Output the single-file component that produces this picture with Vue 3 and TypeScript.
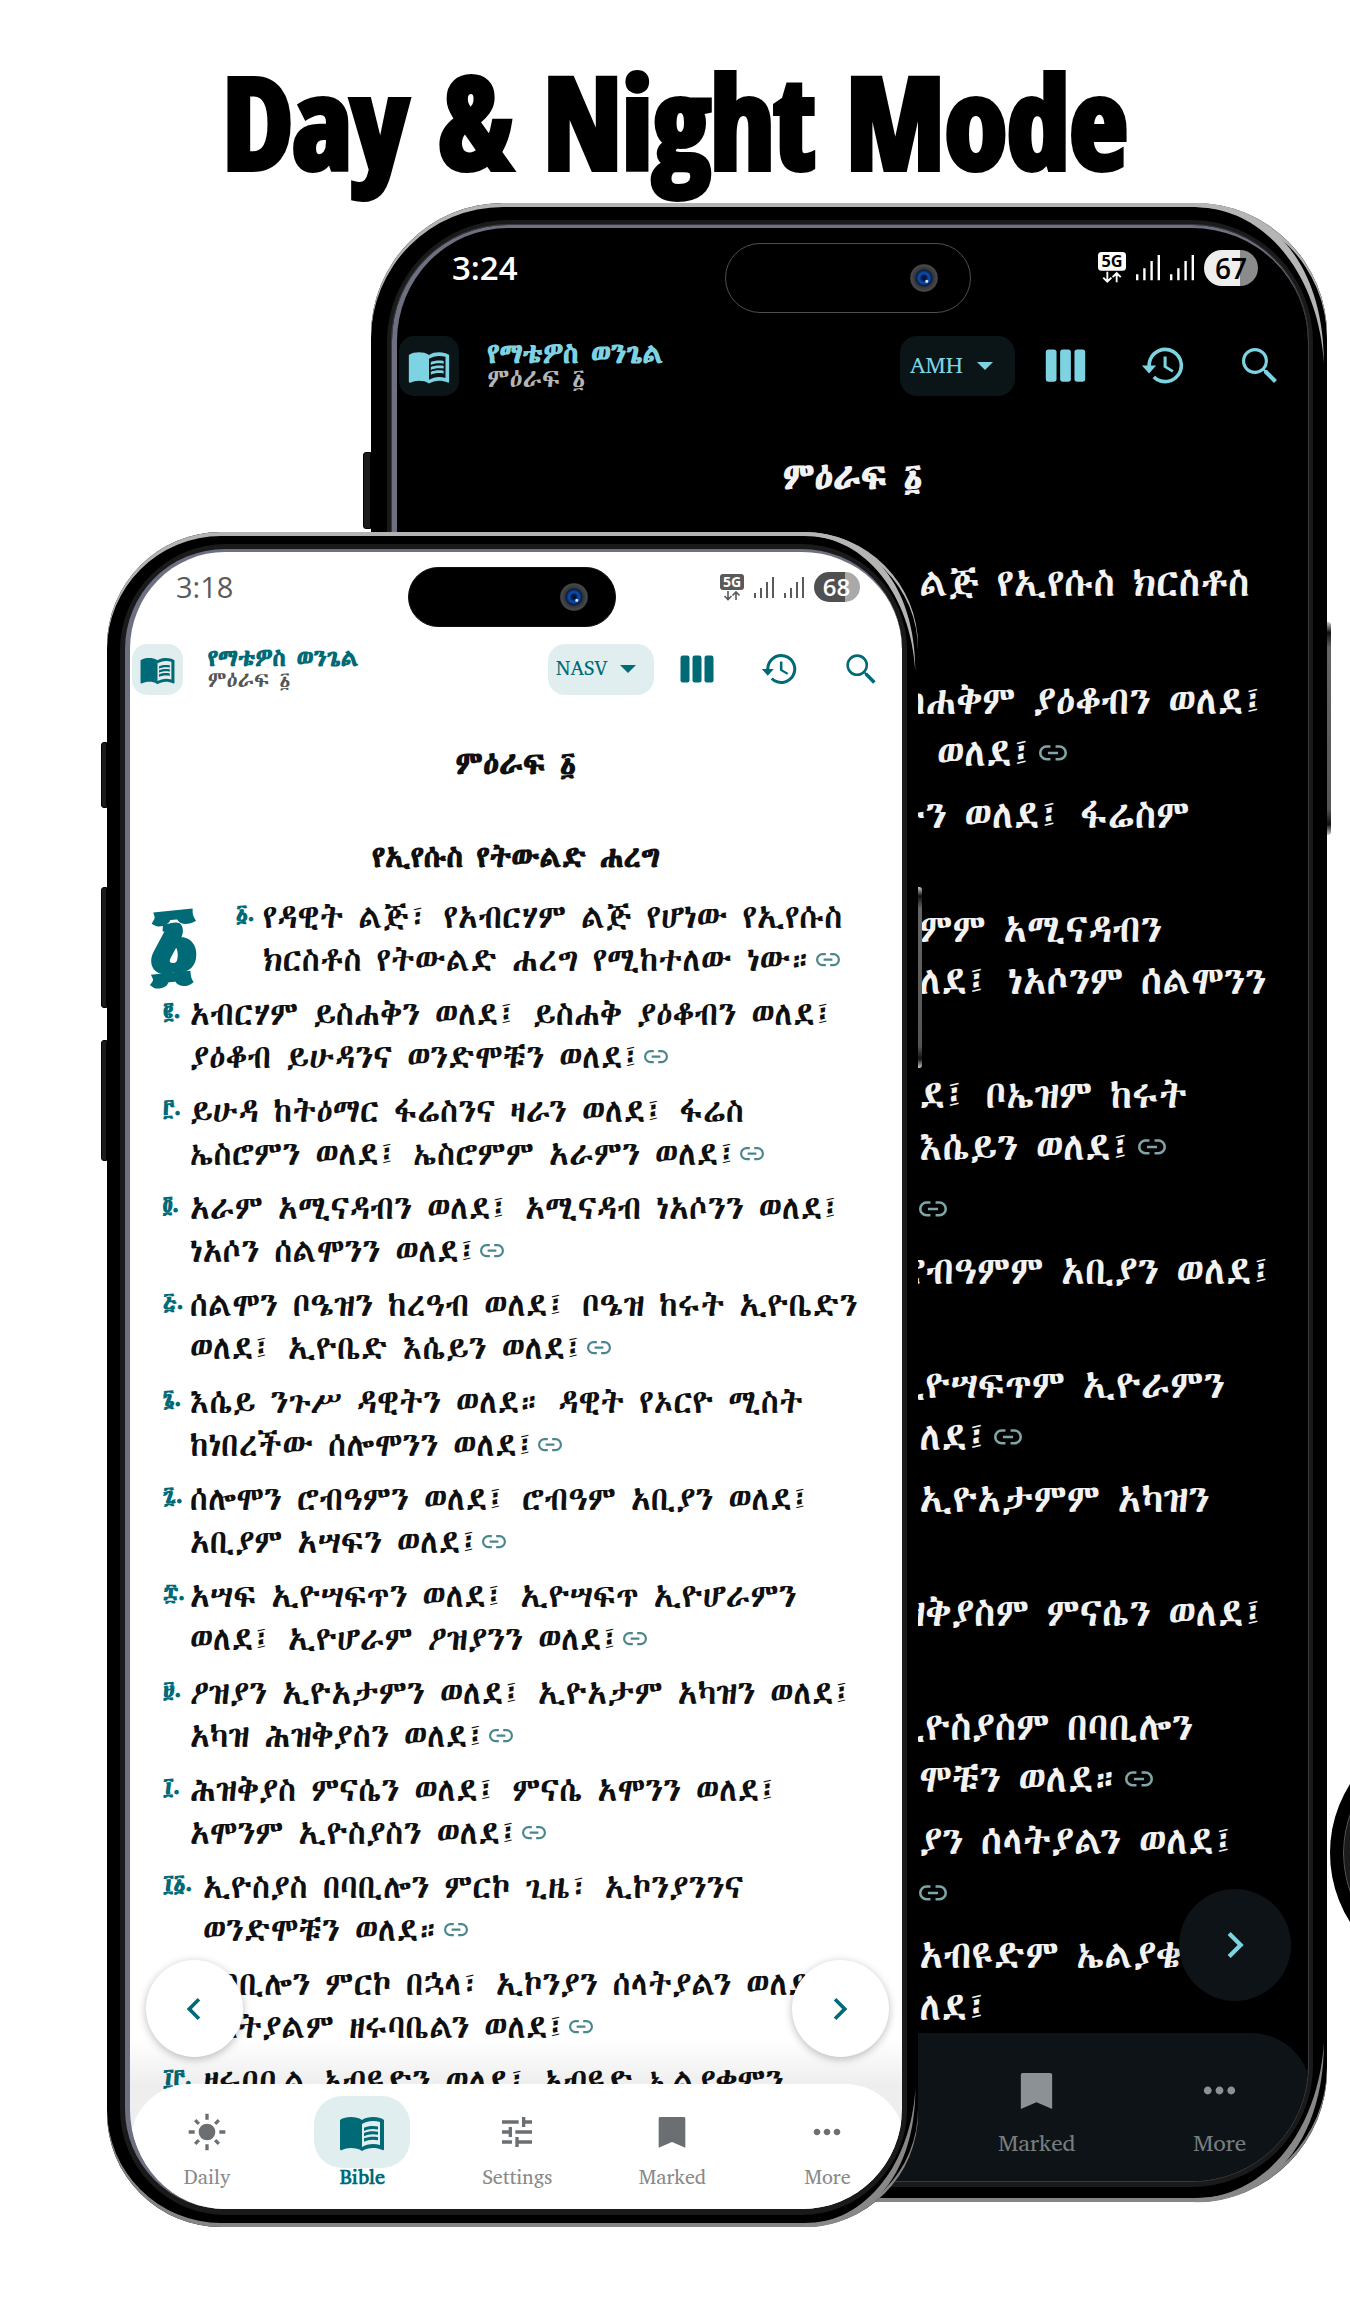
<script setup lang="ts">
interface Verse { num?: string; lines: string[]; link?: boolean; wide?: boolean; drop?: boolean }
interface CutLine { head?: string; text?: string; link?: boolean }
interface Phone { theme: 'night' | 'day'; time: string; battery: number; version: string; heading?: string }

const phones: Phone[] = [
  { theme: 'night', time: '3:24', battery: 67, version: 'AMH' },
  { theme: 'day', time: '3:18', battery: 68, version: 'NASV', heading: 'የኢየሱስ የትውልድ ሐረግ' },
]

const verses: Verse[] = [
  { num: '፩', lines: ['የዳዊት ልጅ፣ የአብርሃም ልጅ የሆነው የኢየሱስ', 'ክርስቶስ የትውልድ ሐረግ የሚከተለው ነው።'], link: true, drop: true },
  { num: '፪', lines: ['አብርሃም ይስሐቅን ወለደ፤ ይስሐቅ ያዕቆብን ወለደ፤', 'ያዕቆብ ይሁዳንና ወንድሞቹን ወለደ፤'], link: true },
  { num: '፫', lines: ['ይሁዳ ከትዕማር ፋሬስንና ዛራን ወለደ፤ ፋሬስ', 'ኤስሮምን ወለደ፤ ኤስሮምም አራምን ወለደ፤'], link: true },
  { num: '፬', lines: ['አራም አሚናዳብን ወለደ፤ አሚናዳብ ነአሶንን ወለደ፤', 'ነአሶን ሰልሞንን ወለደ፤'], link: true },
  { num: '፭', lines: ['ሰልሞን ቦዔዝን ከረዓብ ወለደ፤ ቦዔዝ ከሩት ኢዮቤድን', 'ወለደ፤ ኢዮቤድ እሴይን ወለደ፤'], link: true },
  { num: '፮', lines: ['እሴይ ንጉሥ ዳዊትን ወለደ። ዳዊት የኦርዮ ሚስት', 'ከነበረችው ሰሎሞንን ወለደ፤'], link: true },
  { num: '፯', lines: ['ሰሎሞን ሮብዓምን ወለደ፤ ሮብዓም አቢያን ወለደ፤', 'አቢያም አሣፍን ወለደ፤'], link: true },
  { num: '፰', lines: ['አሣፍ ኢዮሣፍጥን ወለደ፤ ኢዮሣፍጥ ኢዮሆራምን', 'ወለደ፤ ኢዮሆራም ዖዝያንን ወለደ፤'], link: true },
  { num: '፱', lines: ['ዖዝያን ኢዮአታምን ወለደ፤ ኢዮአታም አካዝን ወለደ፤', 'አካዝ ሕዝቅያስን ወለደ፤'], link: true },
  { num: '፲', lines: ['ሕዝቅያስ ምናሴን ወለደ፤ ምናሴ አሞንን ወለደ፤', 'አሞንም ኢዮስያስን ወለደ፤'], link: true },
  { num: '፲፩', lines: ['ኢዮስያስ በባቢሎን ምርኮ ጊዜ፣ ኢኮንያንንና', 'ወንድሞቹን ወለደ።'], link: true, wide: true },
  { num: '፲፪', lines: ['ከባቢሎን ምርኮ በኋላ፣ ኢኮንያን ሰላትያልን ወለደ፤', 'ሰላትያልም ዘሩባቤልን ወለደ፤'], link: true, wide: true },
  { num: '፲፫', lines: ['ዘሩባቤል አብዩድን ወለደ፤ አብዩድ ኤልያቄምን'], wide: true },
]

const nightVerses: CutLine[][] = [
  [{ text: 'ልጅ የኢየሱስ ክርስቶስ' }, {}],
  [{ head: 'ስ', text: 'ሐቅም ያዕቆብን ወለደ፤' }, { text: ' ወለደ፤', link: true }],
  [{ head: 'ሁ', text: 'ን ወለደ፤ ፋሬስም' }, {}],
  [{ text: 'ምም አሚናዳብን' }, { text: 'ለደ፤ ነአሶንም ሰልሞንን' }, {}],
  [{ text: 'ደ፤ ቦኤዝም ከሩት' }, { text: 'እሴይን ወለደ፤', link: true }],
  [{ link: true }],
  [{ head: 'ሮ', text: 'ብዓምም አቢያን ወለደ፤' }, {}],
  [{ head: 'ኢ', text: 'ዮሣፍጥም ኢዮራምን' }, { text: 'ለደ፤', link: true }],
  [{ text: 'ኢዮአታምም አካዝን' }, {}],
  [{ head: 'ዝ', text: 'ቅያስም ምናሴን ወለደ፤' }, {}],
  [{ head: 'ኢ', text: 'ዮስያስም በባቢሎን' }, { text: 'ሞቹን ወለደ።', link: true }],
  [{ text: 'ያን ሰላትያልን ወለደ፤' }, { link: true }],
  [{ text: 'አብዩድም ኤልያቄ' }, { text: 'ለደ፤' }],
]

const book = 'M21 5c-1.11-.35-2.33-.5-3.5-.5-1.95 0-4.05.4-5.5 1.5-1.45-1.1-3.55-1.5-5.5-1.5S2.45 4.9 1 6v14.65c0 .25.25.5.5.5.1 0 .15-.05.25-.05C3.1 20.45 5.05 20 6.5 20c1.95 0 4.05.4 5.5 1.5 1.35-.85 3.8-1.5 5.5-1.5 1.65 0 3.35.3 4.75 1.05.1.05.15.05.25.05.25 0 .5-.25.5-.5V6c-.6-.45-1.25-.75-2-1zm0 13.5c-1.1-.35-2.3-.5-3.5-.5-1.7 0-4.15.65-5.5 1.5V8c1.35-.85 3.8-1.5 5.5-1.5 1.2 0 2.4.15 3.5.5v11.5z M17.5 10.5c.88 0 1.73.09 2.5.26V9.24c-.79-.15-1.64-.24-2.5-.24-1.7 0-3.24.29-4.5.83v1.66c1.13-.64 2.7-.99 4.5-.99z M13 12.49v1.66c1.13-.64 2.7-.99 4.5-.99.88 0 1.73.09 2.5.26V11.9c-.79-.15-1.64-.24-2.5-.24-1.7 0-3.24.3-4.5.83z M17.5 14.33c-1.7 0-3.24.29-4.5.83v1.66c1.13-.64 2.7-.99 4.5-.99.88 0 1.73.09 2.5.26v-1.52c-.79-.16-1.64-.24-2.5-.24z'

const tabs = [
  { label: 'Daily', icon: 'M11 1h2v3.6h-2z M11 19.4h2V23h-2z M1 11h3.6v2H1z M19.4 11H23v2h-3.6z M4.2 5.6l1.4-1.4 2.2 2.2-1.4 1.4z M16.2 17.6l1.4-1.4 2.2 2.2-1.4 1.4z M18.4 4.2l1.4 1.4-2.2 2.2-1.4-1.4z M6.4 16.2l1.4 1.4-2.2 2.2-1.4-1.4z M12 7a5 5 0 1 0 0 10a5 5 0 1 0 0-10z' },
  { label: 'Bible', icon: book, active: true },
  { label: 'Settings', icon: 'M3 17v2h6v-2H3zM3 5v2h10V5H3zm10 16v-2h8v-2h-8v-2h-2v6h2zM7 9v2H3v2h4v2h2V9H7zm14 4v-2H11v2h10zm-6-4h2V7h4V5h-4V3h-2v6z' },
  { label: 'Marked', icon: 'M19 3H5c-.6 0-1 .4-1 1v17.500l8-3.500 8 3.500V4c0-.6-.4-1-1-1z' },
  { label: 'More', icon: 'M6 10c-1.100 0-2 .9-2 2s.9 2 2 2 2-.9 2-2-.9-2-2-2zm12 0c-1.100 0-2 .9-2 2s.9 2 2 2 2-.9 2-2-.9-2-2-2zm-6 0c-1.100 0-2 .9-2 2s.9 2 2 2 2-.9 2-2-.9-2-2-2z' },
]
</script>

<template>
  <main class="page">
    <h1 class="title">Day &amp; Night Mode</h1>
    <div class="stage">
      <section v-for="p in phones" :key="p.theme" class="phone" :class="p.theme" :aria-label="p.theme">
        <i class="side side-a"></i><i class="side side-b"></i><i class="side side-c"></i><i class="side side-r"></i>
        <svg class="gleam gleam-top" viewBox="0 0 130 160"><path d="M0 0C76 0 127 62 127 158C122 74 72 5 0 4Z" /></svg>
        <svg class="gleam gleam-bottom" viewBox="0 0 130 160"><path d="M0 0C76 0 127 62 127 158C122 74 72 5 0 4Z" /></svg>
        <div class="bezel">
          <div class="screen">
            <div class="island"><i class="camera"></i></div>
            <div class="status">
              <time>{{ p.time }}</time>
              <span class="signals">
                <svg class="net" viewBox="0 0 24 27">
                  <rect width="24" height="16" rx="3" fill="currentColor" />
                  <text x="12" y="13" text-anchor="middle" class="net-text">5G</text>
                  <path d="M8 17v8M4.500 22L8 25.500 11.500 22M16 26v-8M12.500 21.500L16 18l3.500 3.500" fill="none" stroke="currentColor" stroke-width="1.600" />
                </svg>
                <svg v-for="n in 2" :key="n" class="bars" viewBox="0 0 20 21"><path d="M0 16h2v5H0zM6 11h2v10H6zM12 5h2v16h-2zM18 0h2v21h-2z" fill="currentColor" /></svg>
                <span class="battery">{{ p.battery }}</span>
              </span>
            </div>
            <header class="bar">
              <button class="book" aria-label="Books"><svg viewBox="0 0 24 24"><path fill-rule="evenodd" :d="book" /></svg></button>
              <div class="names">
                <strong>የማቴዎስ ወንጌል</strong>
                <span>ምዕራፍ ፩</span>
              </div>
              <label class="version">
                <select aria-label="Version"><option>{{ p.version }}</option></select>
                <svg viewBox="0 0 24 24"><path d="M4 8l8 8 8-8z" /></svg>
              </label>
              <button class="tool" aria-label="Columns"><svg viewBox="0 0 24 24"><rect x="1" y="3" width="6" height="18" rx="1.500" /><rect x="9" y="3" width="6" height="18" rx="1.500" /><rect x="17" y="3" width="6" height="18" rx="1.500" /></svg></button>
              <button class="tool" aria-label="History"><svg viewBox="0 0 24 24"><path d="M13.500 2A10 10 0 0 0 3.500 12H.5l4 4.500 4-4.500h-3a8 8 0 1 1 2.340 5.660l-1.400 1.400A10 10 0 1 0 13.500 2zM12.600 7v6l4.800 2.900.8-1.300-3.900-2.300V7z" /></svg></button>
              <button class="tool" aria-label="Search"><svg viewBox="1 1 21.500 21.500"><path d="M15.500 14h-.79l-.28-.27A6.471 6.471 0 0 0 16 9.500 6.500 6.500 0 1 0 9.500 16c1.610 0 3.090-.59 4.230-1.570l.27.28v.79l5 4.990L20.490 19l-4.990-5zm-6 0.400C6.800 14.400 4.600 12.200 4.600 9.500S6.800 4.600 9.500 4.600 14.400 6.800 14.400 9.500 12.200 14.400 9.500 14.400z" /></svg></button>
            </header>
            <h2 class="chapter">ምዕራፍ ፩</h2>
            <h3 v-if="p.heading" class="heading">{{ p.heading }}</h3>

            <div v-if="p.theme === 'day'" class="text">
              <div v-for="v in verses" :key="v.num" class="verse" :class="{ wide: v.wide, first: v.drop }">
                <b v-if="v.drop" class="drop">፩</b>
                <sup class="num">{{ v.num }}.</sup>
                <div class="body">
                  <p v-for="(l, i) in v.lines" :key="l">{{ l }}<a v-if="v.link && i === v.lines.length - 1" href="#ref" class="ref" aria-label="Reference"><svg viewBox="1 0 22 14"><path d="M10 2H7a5 5 0 0 0 0 10h3M14 2h3a5 5 0 0 1 0 10h-3M8 7h8" /></svg></a></p>
                </div>
              </div>
            </div>
            <div v-else class="text">
              <div v-for="(v, k) in nightVerses" :key="k" class="verse">
                <p v-for="(l, i) in v" :key="i" class="cut"><span class="head" :class="{ part: l.head }">{{ l.head }}</span><span class="tail">{{ l.text }}<a v-if="l.link" href="#ref" class="ref" :class="{ lone: !l.text }" aria-label="Reference"><svg viewBox="1 0 22 14"><path d="M10 2H7a5 5 0 0 0 0 10h3M14 2h3a5 5 0 0 1 0 10h-3M8 7h8" /></svg></a></span></p>
              </div>
            </div>

            <footer class="foot">
              <button class="fab prev" aria-label="Previous"><svg viewBox="0 0 24 24"><path d="M15.400 7.400L14 6l-6 6 6 6 1.400-1.400L10.800 12z" /></svg></button>
              <button class="fab next" aria-label="Next"><svg viewBox="0 0 24 24"><path d="M8.600 7.400L10 6l6 6-6 6-1.400-1.400L13.200 12z" /></svg></button>
              <nav class="tabs">
                <a v-for="t in tabs" :key="t.label" href="#tab" class="tab" :class="{ active: t.active }">
                  <span class="glyph"><svg viewBox="0 0 24 24"><path fill-rule="evenodd" :d="t.icon" /></svg></span>
                  {{ t.label }}
                </a>
              </nav>
            </footer>
          </div>
        </div>
      </section>
    </div>
    <i class="orb"></i>
  </main>
</template>

<style>
body { margin: 0; background: #fff; }
</style>

<style scoped>
* { box-sizing: border-box; }
.page { position: relative; overflow: hidden; padding-bottom: 73px; }
.title { margin: 0; padding-top: 44px; height: 203px; text-align: center; white-space: nowrap; color: #000; font: 700 126px/152px "Open Sans Condensed", "DejaVu Sans Condensed", sans-serif; -webkit-text-stroke: 6px #000; }
.stage { display: grid; align-items: start; }
.phone { grid-area: 1 / 1; position: relative; isolation: isolate; background: #000; font-family: "Abyssinica SIL", "Noto Serif Ethiopic", "FreeSerif", "Noto Sans Ethiopic", "Liberation Serif", serif; }
.night {
  --accent: #7ed3e2; --tint: #0b1517; --ink: #f2f2f2; --dim: #b5b5b5; --surface: #0d1317; --page: #000; --icon: #8b9194; --label: #777c7f; --ref: #7fa5a8; --stat: #fff; --knob: #4d4e50;
  --r: 132px; --ri: 116px; --status: 80px; --bar: 115px; --box: 60px; --book: 44px; --tool: 97px; --ic: 43px; --fs: 39px; --lh: 52px; --chap: 107px;
  --time: 33px; --h: 28px; --sub: 26px; --foot: 148px; --fab: 112px; --pill: 85px; --lab: 23px;
  width: 70.8%; margin-left: 27.5%; padding: 17px 14px 15px 16px;
}
.day {
  --accent: #006a76; --tint: #e1eef0; --ink: #101010; --dim: #555; --surface: #fff; --page: #fff; --icon: #6c6f71; --label: #8a8a8a; --ref: #4a868d; --stat: #5a5a5a; --knob: #111;
  --r: 114px; --ri: 100px; --status: 70px; --bar: 94px; --box: 51px; --book: 37px; --tool: 82px; --ic: 36px; --fs: 33px; --lh: 43px; --chap: 95px;
  --time: 29px; --h: 24px; --sub: 22px; --foot: 125px; --fab: 97px; --pill: 72px; --lab: 20px;
  width: 60.1%; margin: 329px 0 0 7.9%; padding: 12px 11px 12px 13px;
}
.phone { border-radius: var(--r); box-shadow: inset 0 4px 0 #b3b3b3, inset 0 -4px 0 #858585; }
.bezel { border: 5px solid #1a1a1a; border-bottom-width: 6px; border-radius: calc(var(--ri) + 6px); background: #1a1a1a; }
.screen { position: relative; overflow: hidden; border-left: 5px solid #6d7080; border-top: 3px solid #6d7080; border-radius: var(--ri); background: var(--page); color: var(--ink); }
.night .screen { outline: 1px solid #3b3b3d; }
.gleam { position: absolute; width: var(--r); right: 0; fill: #b5b5b5; }
.gleam-top { top: 0; }
.gleam-bottom { bottom: 0; fill: #888; transform: scaleY(-1); }
.side { position: absolute; width: 6px; left: -6px; border-radius: 3px 0 0 3px; background: #1b1b1c; border: 1px solid #000; }
.day .side-a { top: 210px; height: 66px; }
.day .side-b { top: 355px; height: 121px; }
.day .side-c { top: 508px; height: 121px; }
.night .side-a { top: 249px; height: 77px; width: 8px; left: -8px; }
.night .side-b, .night .side-c { display: none; }
.side-r { left: auto; right: -4px; width: 4px; background: linear-gradient(#ccc, #111 5%, #666 12%, #555 88%, #111 95%, #ccc); border: 0; border-radius: 0 3px 3px 0; }
.day .side-r { top: 355px; height: 181px; }
.night .side-r { top: 419px; height: 213px; }

.island { position: absolute; top: 15px; left: 36%; width: 27%; height: calc(var(--status) - 10px); border-radius: 36px; background: #000; border: 1px solid var(--knob); }
.camera { position: absolute; right: 13%; top: 50%; width: 28px; height: 28px; margin-top: -14px; border-radius: 50%; background: radial-gradient(circle at 60% 62%, #cfe6ff 1px, transparent 2px), radial-gradient(circle, #06153a 2px, #0d4fb5 5px, #0a1c3d 8px, #333437 9px, #48494c 13px, #2a2a2c 14px); }
.status { height: var(--status); padding: 0 5.5% 0 6%; display: flex; align-items: center; justify-content: space-between; color: var(--stat); }
.status time { font: 400 var(--time)/40px "Open Sans", sans-serif; }
.night time { font-weight: 600; }
.signals { display: flex; align-items: center; gap: 10px; }
.net { width: 24px; overflow: visible; }
.night .net { width: 28px; }
.net-text { font: 700 14px "Open Sans", sans-serif; fill: var(--page); }
.bars { width: 20px; }
.night .bars { width: 24px; }
.battery { width: 46px; border-radius: 18px; text-align: center; font: 600 24px/30px "Open Sans", sans-serif; color: var(--page); background: linear-gradient(90deg, #505050 68%, #a9a9a9 68%); }
.night .battery { width: 54px; font-size: 28px; line-height: 36px; background: linear-gradient(90deg, #eee 67%, #8b8b8b 67%); }

.bar { height: var(--bar); padding-left: 2px; display: flex; align-items: center; }
button { border: 0; background: none; padding: 0; display: grid; place-items: center; }
svg { display: block; }
.bar svg, .fab svg { fill: var(--accent); }
.book { width: var(--box); height: var(--box); border-radius: 15px; background: var(--tint); }
.book svg { width: var(--book); }
.names { flex: 1; padding-left: 25px; display: grid; line-height: 21px; white-space: nowrap; }
.night .names { line-height: 25px; padding-left: 28px; }
.names strong { color: var(--accent); font-size: var(--h); }
.names span { color: var(--dim); font-size: var(--sub); }
.version { display: flex; align-items: center; justify-content: space-between; width: 106px; height: var(--box); padding: 0 14px 0 8px; margin-right: 2px; border-radius: 17px; background: var(--tint); }
.night .version { width: 115px; padding-right: 18px; padding-left: 10px; }
.version select { appearance: none; border: 0; background: none; padding: 0; color: var(--accent); font: inherit; font-size: 20px; line-height: 28px; }
.night .version select { font-size: 23px; }
.version svg { width: 24px; flex: none; }
.tool { width: var(--tool); height: var(--box); }
.tool svg { width: var(--ic); }

.chapter { margin: 0; font-size: 32px; line-height: var(--chap); text-align: center; }
.night .chapter { font-size: 37px; padding-bottom: 27px; }
.heading { margin: 0; padding: 14px 0 7px; font-size: 30px; line-height: 64px; text-align: center; }
.text { font-size: var(--fs); line-height: var(--lh); white-space: nowrap; }
.text p { margin: 0; height: var(--lh); }
.verse { display: flex; margin-bottom: 11px; padding-left: 33px; }
.num { width: 27px; color: var(--accent); font-weight: 700; font-size: 24px; line-height: 34px; vertical-align: top; }
.wide .num { width: 40px; }
.first { padding-left: 20px; }
.drop { width: 86px; color: var(--accent); font-size: 94px; line-height: 88px; height: 86px; font-weight: 900; -webkit-text-stroke: 3px var(--accent); }
.verse:last-child { height: 25px; }
.night .verse { display: block; padding: 0; margin-bottom: 10px; }
.night .verse:first-child { margin-bottom: 14px; }
.night .verse:last-child { margin: 0; height: auto; }
.cut { display: flex; }
.head { width: 57.3%; display: flex; justify-content: flex-end; white-space: pre; }
.head.part { width: 58%; }
.tail { white-space: pre; }
.ref { display: inline-block; width: 24px; margin-left: 2px; vertical-align: 4px; }
.ref svg { width: 100%; }
.night .ref { width: 28px; margin-left: 4px; }
.night .ref.lone { margin-left: 0; }
.ref path { fill: none; stroke: var(--ref); stroke-width: 2; }

.foot { position: relative; margin-top: -12px; }
.night .foot { margin-top: 0; }
.day .foot::before { content: ""; position: absolute; inset: -45px 0 50px; background: linear-gradient(transparent, #0001 45px); }
.tabs { position: relative; display: grid; grid-template-columns: repeat(5, 1fr); height: var(--foot); padding-top: 12px; margin-right: -3px; border-radius: 60px 60px 0 0; background: var(--surface); }
.night .tabs { padding-top: 15px; }
.tab { display: flex; flex-direction: column; align-items: center; color: var(--label); text-decoration: none; font-size: var(--lab); line-height: 20px; }
.night .tab { line-height: 22px; }
.glyph { width: 62%; height: var(--pill); display: grid; place-items: center; border-radius: 28px; }
.glyph svg { width: 40px; fill: var(--icon); }
.night .glyph svg { width: 47px; }
.active { color: var(--accent); font-weight: 700; }
.active .glyph { background: var(--tint); }
.active .glyph svg { width: 48px; fill: var(--accent); }
.fab { position: absolute; z-index: 1; bottom: 152px; width: var(--fab); height: var(--fab); border-radius: 50%; background: var(--surface); box-shadow: 0 2px 9px #0004; }
.night .fab { bottom: 180px; }
.prev { left: 16px; }
.next { right: 13px; }
.night .next { right: 17px; }
.fab svg { width: 44px; }
.night .fab svg { width: 52px; }
.orb { position: absolute; top: 1724px; right: -238px; width: 258px; height: 258px; border-radius: 50%; background: #1c1c1d; border: 13px solid #000; box-shadow: inset 0 0 0 1px #555; }
</style>
